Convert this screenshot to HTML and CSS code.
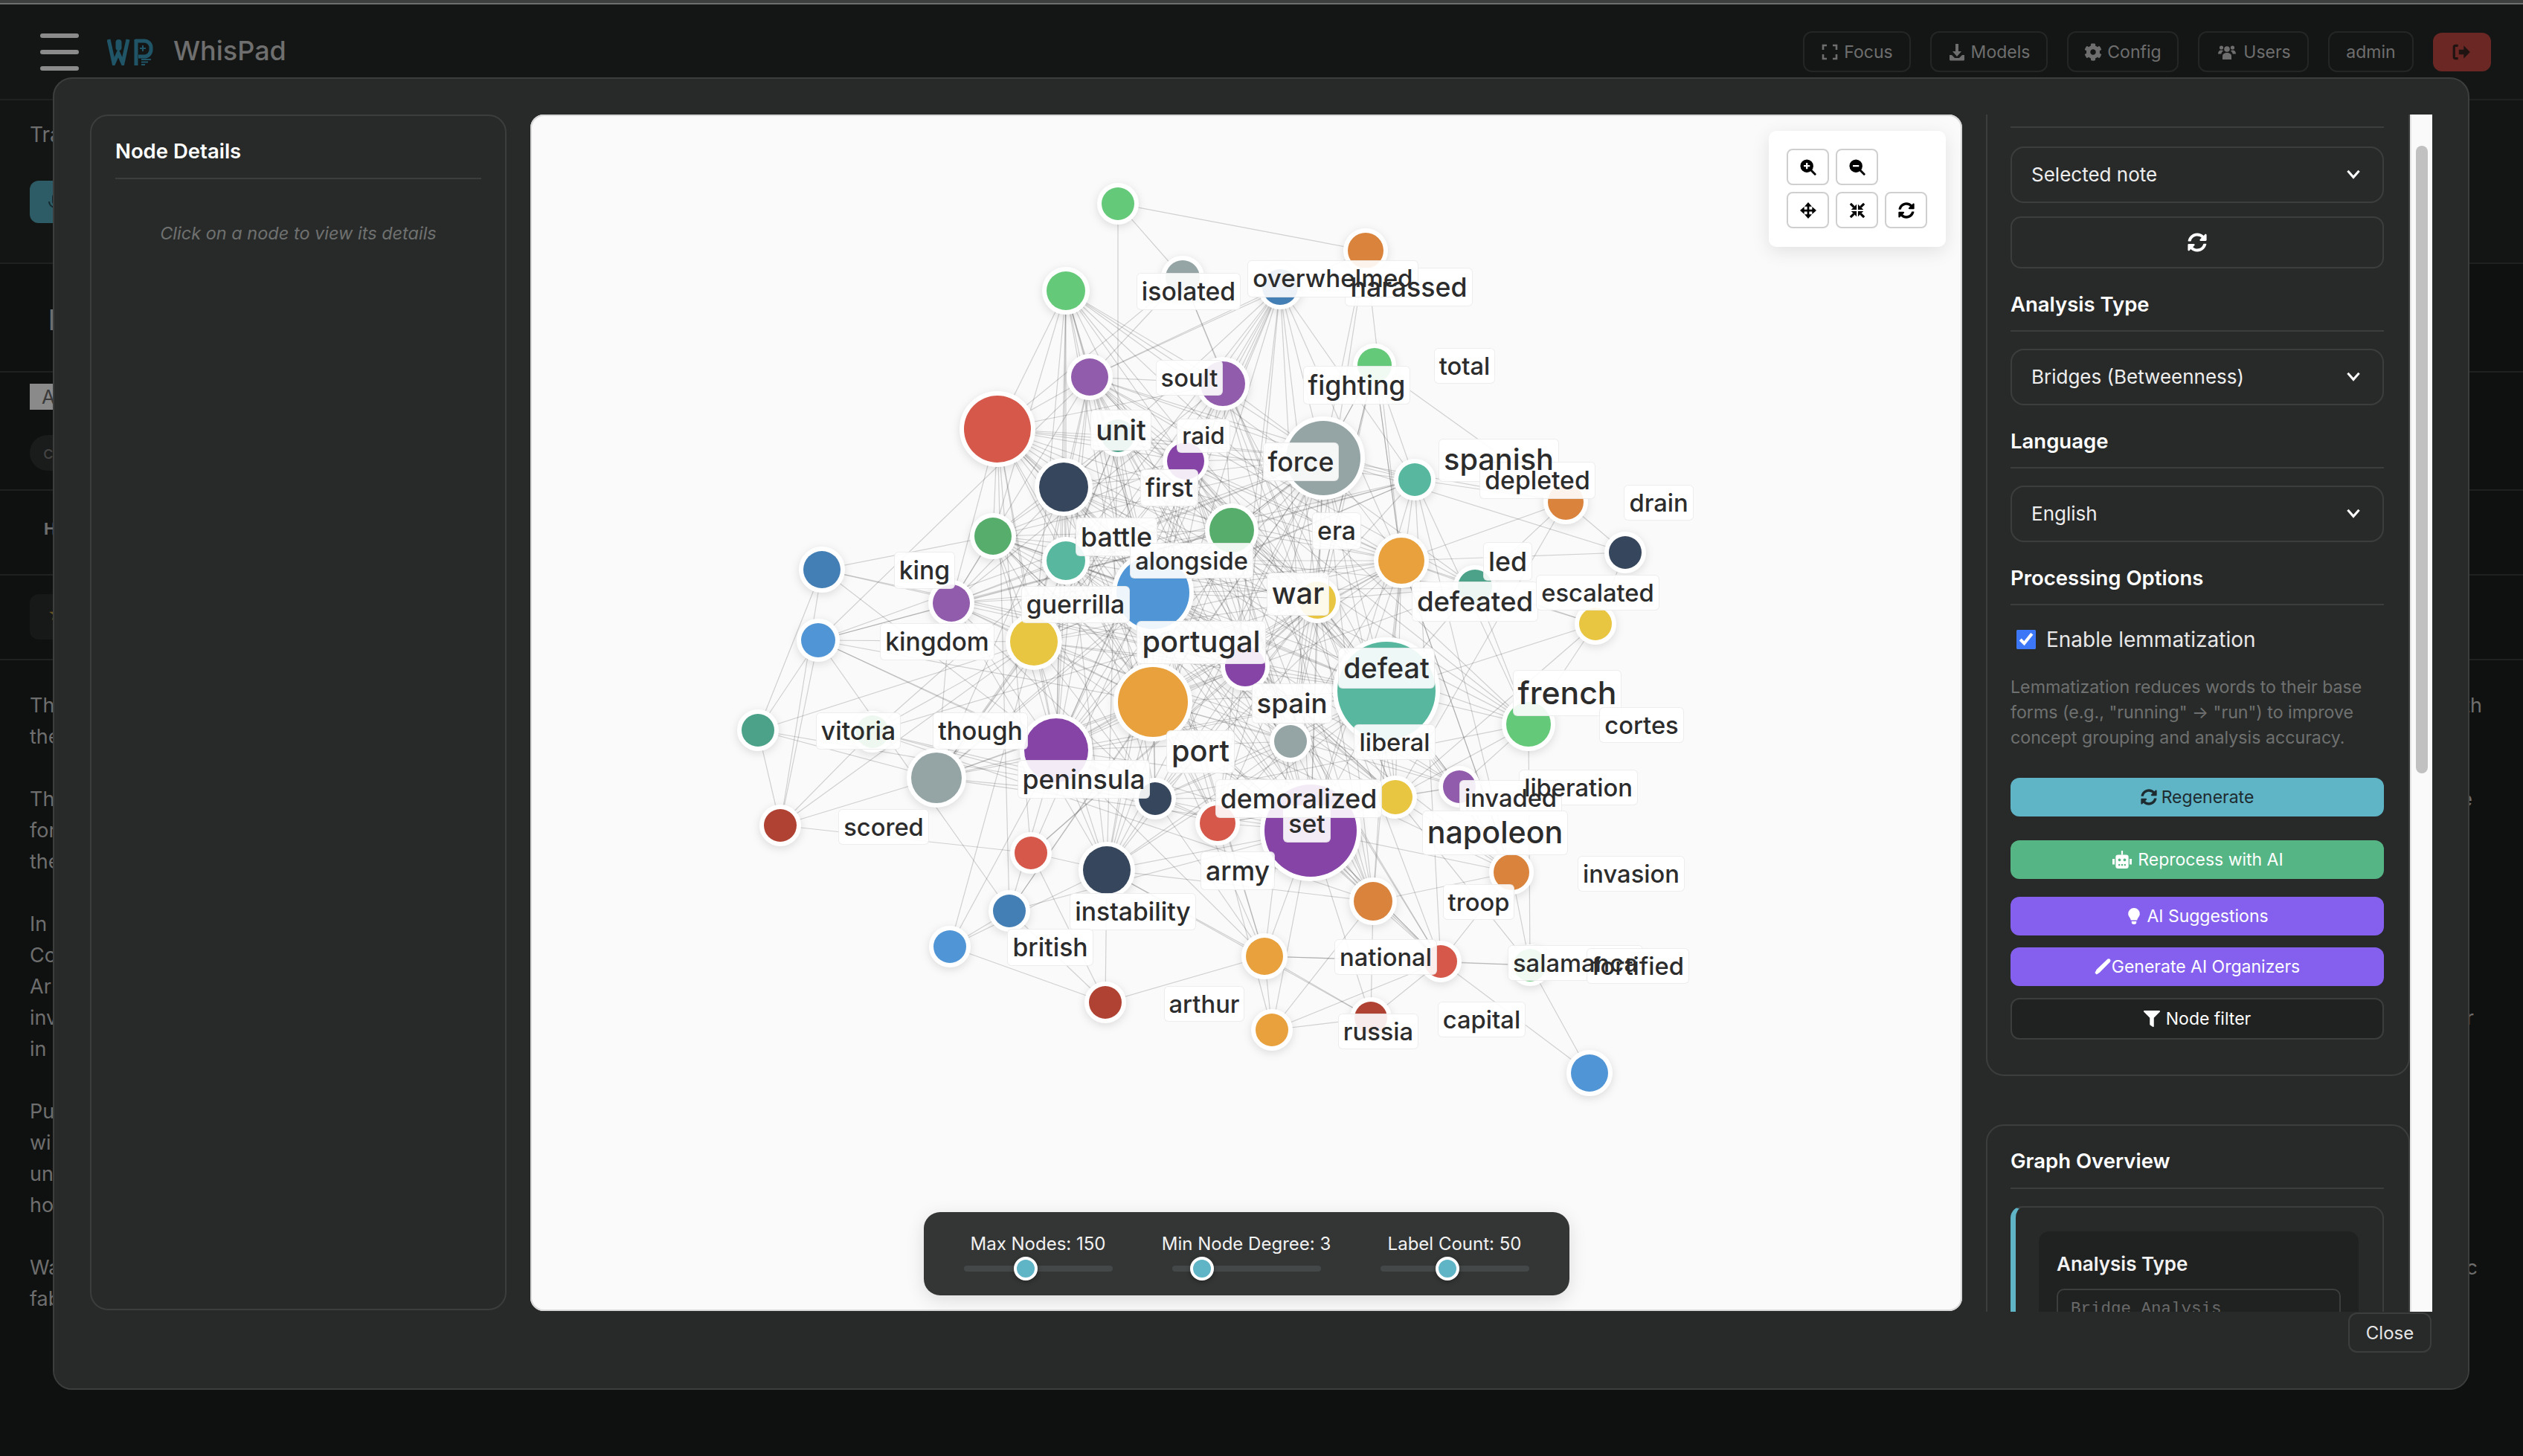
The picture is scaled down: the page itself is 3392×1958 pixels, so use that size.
FILE: index.html
```html
<!DOCTYPE html>
<html lang="en">
<head>
<meta charset="utf-8">
<title>WhisPad</title>
<link rel="stylesheet" href="styles.css">
</head>
<body>
<svg class="sprite" aria-hidden="true">
  <symbol id="i-sync" viewBox="0 0 512 512"><path d="M370.72 133.28C339.458 104.008 298.888 87.962 255.848 88c-77.458.068-144.328 53.178-162.791 126.85-1.344 5.363-6.122 9.15-11.651 9.15H24.103c-7.498 0-13.194-6.807-11.807-14.176C33.933 94.924 134.813 8 256 8c66.448 0 126.791 26.136 171.315 68.685L463.03 40.97C478.149 25.851 504 36.559 504 57.941V192c0 13.255-10.745 24-24 24H345.941c-21.382 0-32.09-25.851-16.971-40.971l41.75-41.749zM32 296h134.059c21.382 0 32.09 25.851 16.971 40.971l-41.75 41.75c31.262 29.273 71.835 45.319 114.876 45.28 77.418-.07 144.315-53.144 162.787-126.849 1.344-5.363 6.122-9.15 11.651-9.15h57.304c7.498 0 13.194 6.807 11.807 14.176C478.067 417.076 377.187 504 256 504c-66.448 0-126.791-26.136-171.315-68.685L48.97 471.03C33.851 486.149 8 475.441 8 454.059V320c0-13.255 10.745-24 24-24z"/></symbol>
  <symbol id="i-cog" viewBox="0 0 512 512"><path d="M487.4 315.7l-42.6-24.6c4.3-23.2 4.3-47 0-70.2l42.6-24.6c4.9-2.8 7.1-8.6 5.5-14-11.1-35.6-30-67.8-54.7-94.6-3.8-4.1-10-5.1-14.8-2.3L380.8 110c-17.9-15.4-38.5-27.3-60.8-35.1V25.8c0-5.6-3.9-10.5-9.4-11.7-36.7-8.2-74.3-7.8-109.2 0-5.5 1.2-9.4 6.1-9.4 11.7V75c-22.2 7.9-42.8 19.8-60.8 35.1L88.7 85.5c-4.9-2.8-11-1.9-14.8 2.3-24.7 26.7-43.6 58.9-54.7 94.6-1.7 5.4.6 11.2 5.5 14L67.3 221c-4.3 23.2-4.3 47 0 70.2l-42.6 24.6c-4.9 2.8-7.1 8.6-5.5 14 11.1 35.6 30 67.8 54.7 94.6 3.8 4.1 10 5.1 14.8 2.3l42.6-24.6c17.9 15.4 38.5 27.3 60.8 35.1v49.2c0 5.6 3.9 10.5 9.4 11.7 36.7 8.2 74.3 7.8 109.2 0 5.5-1.2 9.4-6.1 9.4-11.7v-49.2c22.2-7.9 42.8-19.8 60.8-35.1l42.6 24.6c4.9 2.8 11 1.9 14.8-2.3 24.7-26.7 43.6-58.9 54.7-94.6 1.5-5.5-.7-11.3-5.6-14.1zM256 336c-44.1 0-80-35.9-80-80s35.9-80 80-80 80 35.9 80 80-35.9 80-80 80z"/></symbol>
  <symbol id="i-filter" viewBox="0 0 512 512"><path d="M487.976 0H24.028C2.71 0-8.047 25.866 7.058 40.971L192 225.941V432c0 7.831 3.821 15.17 10.237 19.662l80 55.98C298.02 518.69 320 507.493 320 487.98V225.941l184.947-184.97C520.021 25.896 509.338 0 487.976 0z"/></symbol>
  <symbol id="i-focus" viewBox="0 0 24 24"><path d="M3 9V3h5M16 3h5v6M21 15v6h-5M8 21H3v-6" fill="none" stroke="currentColor" stroke-width="2.6"/></symbol>
  <symbol id="i-download" viewBox="0 0 24 24"><path d="M10 1h4v10h4l-6 7-6-7h4z"/><path d="M2 16h3l4 4h6l4-4h3v6a1.500 1.500 0 0 1-1.500 1.500h-17A1.500 1.500 0 0 1 2 22z"/></symbol>
  <symbol id="i-users" viewBox="0 0 24 24"><circle cx="12" cy="8" r="3.800"/><path d="M6 22v-4.500C6 14.500 8.500 13 12 13s6 1.500 6 4.500V22z"/><circle cx="4.500" cy="6" r="2.600"/><circle cx="19.500" cy="6" r="2.600"/><path d="M0 14.500C0 11 1.800 9.500 4.500 9.500c1 0 1.900.2 2.700.7C5.400 11.500 4.500 13 4.300 14.500z"/><path d="M24 14.500C24 11 22.200 9.500 19.500 9.500c-1 0-1.900.2-2.700.7 1.800 1.300 2.700 2.800 2.900 4.300z"/></symbol>
  <symbol id="i-logout" viewBox="0 0 24 24"><path d="M8 4H5a2 2 0 0 0-2 2v12a2 2 0 0 0 2 2h3" fill="none" stroke="currentColor" stroke-width="3"/><path d="M9 9h6V4l8 8-8 8v-5H9z"/></symbol>
  <symbol id="i-zoomin" viewBox="0 0 24 24"><circle cx="10" cy="10" r="9.500"/><path d="M10 5.500v9M5.500 10h9" stroke="#fff" stroke-width="2.600"/><path d="M15 15l7 7" stroke="#000" stroke-width="3.200" stroke-linecap="round"/></symbol>
  <symbol id="i-zoomout" viewBox="0 0 24 24"><circle cx="10" cy="10" r="9.500"/><path d="M5.500 10h9" stroke="#fff" stroke-width="2.600"/><path d="M15 15l7 7" stroke="#000" stroke-width="3.200" stroke-linecap="round"/></symbol>
  <symbol id="i-move" viewBox="0 0 24 24"><path d="M12 0l5.500 6.200h-4v4.300h4.300v-4L24 12l-6.200 5.500v-4h-4.300v4.300h4L12 24l-5.500-6.200h4v-4.300H6.200v4L0 12l6.200-5.500v4h4.300V6.200h-4z"/></symbol>
  <symbol id="i-compress" viewBox="0 0 24 24"><path d="M11 3V11H3zM13 3V11h8zM11 21V13H3zM13 21V13h8z"/><path d="M7 7L2 2M17 7l5-5M7 17l-5 5M17 17l5 5" stroke="#000" stroke-width="3.400"/></symbol>
  <symbol id="i-robot" viewBox="0 0 24 24"><path fill-rule="evenodd" d="M7 6h10a3 3 0 0 1 3 3v11a3 3 0 0 1-3 3H7a3 3 0 0 1-3-3V9a3 3 0 0 1 3-3zM8.800 10.500a1.800 1.800 0 1 0 0 3.600 1.800 1.800 0 1 0 0-3.600zM15.200 10.500a1.800 1.800 0 1 0 0 3.600 1.800 1.800 0 1 0 0-3.600zM7.500 17.500v2h2v-2zM11 17.500v2h2v-2zM14.500 17.500v2h2v-2z"/><path d="M11 1h2v5h-2zM0 11h2.800v7H0zM21.200 11H24v7h-2.800z"/></symbol>
  <symbol id="i-bulb" viewBox="0 0 24 24"><path d="M12 0a8.500 8.500 0 0 0-8.500 8.500c0 4 3 5.500 4 9.500h9c1-4 4-5.500 4-9.500A8.500 8.500 0 0 0 12 0z"/><path d="M8.500 19.500h7V21a3 3 0 0 1-3 3h-1a3 3 0 0 1-3-3z"/></symbol>
  <symbol id="i-pen" viewBox="0 0 24 24"><path d="M19 .8c1.200-1 3-.7 3.800.5 1 1.200.8 2.800-.2 3.800L7.500 20.500 3 23.500l-2.500-2.500 2.500-5z"/></symbol>
  <symbol id="i-mic" viewBox="0 0 24 24"><rect x="8" y="1" width="8" height="14" rx="4"/><path d="M4 11a8 8 0 0 0 16 0M12 19v4" fill="none" stroke="currentColor" stroke-width="2"/></symbol>
  <symbol id="i-chev" viewBox="0 0 24 24"><path d="M5 8l7 8 7-8" fill="none" stroke="currentColor" stroke-width="2.800"/></symbol>
</svg>

<div class="app">
  <div class="strip"></div>
  <header class="topbar">
    <button class="burger" aria-label="Menu"><i></i><i></i><i></i></button>
    <svg class="logo" viewBox="0 0 64 36" aria-hidden="true">
      <path d="M2 1l7 32 6-14 6 14 7-32" fill="none" stroke="currentColor" stroke-width="5"/>
      <rect x="11.500" y="1" width="8" height="15" rx="4" fill="currentColor"/>
      <path d="M39 1v35" stroke="currentColor" stroke-width="5"/>
      <path d="M38 3h12a9 9 0 0 1 9 9v3a9 9 0 0 1-9 9h-8" fill="none" stroke="currentColor" stroke-width="5"/>
      <path d="M48 9v8M44 13h8M46 28h13M46 31.500h9M46 35h5" stroke="currentColor" stroke-width="2" fill="none"/>
    </svg>
    <span class="brand">WhisPad</span>
    <nav class="topnav">
      <button class="topbtn b-focus"><svg class="ic"><use href="#i-focus"/></svg>Focus</button>
      <button class="topbtn b-models"><svg class="ic"><use href="#i-download"/></svg>Models</button>
      <button class="topbtn b-config"><svg class="ic"><use href="#i-cog"/></svg>Config</button>
      <button class="topbtn b-users"><svg class="ic ic-wide"><use href="#i-users"/></svg>Users</button>
      <button class="topbtn b-admin">admin</button>
      <button class="logout" aria-label="Log out"><svg class="ic"><use href="#i-logout"/></svg></button>
    </nav>
  </header>

  <section class="bg-sec bg-a">
    <div class="bg-title">Transcribe</div>
    <button class="bg-rec"><svg class="ic"><use href="#i-mic"/></svg></button>
  </section>
  <section class="bg-sec bg-b"><div class="bg-note">Note</div></section>
  <section class="bg-sec bg-c">
    <span class="bg-tag">AI</span>
    <span class="bg-pill">concept</span>
  </section>
  <section class="bg-sec bg-d"><strong class="bg-h">H1</strong></section>
  <section class="bg-sec bg-e"><div class="bg-box"><span class="bg-star">★</span></div></section>
  <article class="bg-text">
    <p><span class="ln l-th"><span>Th</span><span>th</span></span><span class="ln">the</span></p>
    <p><span class="ln l-e"><span>Th</span><span>e</span></span><span class="ln">for</span><span class="ln">the</span></p>
    <p><span class="ln">In</span><span class="ln">Co</span><span class="ln">Ar</span><span class="ln l-r"><span>inv</span><span>r</span></span><span class="ln">in</span></p>
    <p><span class="ln">Pu</span><span class="ln">wi</span><span class="ln">un</span><span class="ln">ho</span></p>
    <p><span class="ln l-c"><span>Wa</span><span>c</span></span><span class="ln">fab</span></p>
  </article>
</div>

<div class="modal" role="dialog">
  <div class="modal-body">
    <aside class="panel details">
      <h3 class="sect sect-first">Node Details</h3>
      <p class="empty">Click on a node to view its details</p>
    </aside>

    <main class="canvas">
      <svg class="graph" viewBox="713 154 1925 1609" aria-hidden="true">
        <g id="edges" class="edges"></g>
        <g class="nodes">
          <circle class="node green" data-id="g1" data-w="0" cx="1503" cy="274" r="22"/>
          <circle class="node gray" data-id="gr1" data-w="6" cx="1590" cy="373" r="23"/>
          <circle class="node green" data-id="g2" data-w="22" cx="1433" cy="391" r="26"/>
          <circle class="node dblue" data-id="b1" data-w="18" cx="1721" cy="386" r="24"/>
          <circle class="node dorange" data-id="o1" data-w="0" cx="1836" cy="337" r="24"/>
          <circle class="node purple" data-id="pu1" data-w="25" cx="1465" cy="507" r="25"/>
          <circle class="node purple" data-id="pu2" data-w="20" cx="1644" cy="516" r="30"/>
          <circle class="node green" data-id="g3" data-w="8" cx="1848" cy="491" r="23"/>
          <circle class="node red" data-id="r1" data-w="40" cx="1341" cy="577" r="45"/>
          <circle class="node dteal" data-id="t1" data-w="25" cx="1503" cy="586" r="22"/>
          <circle class="node dpurple" data-id="pd1" data-w="25" cx="1594" cy="620" r="25"/>
          <circle class="node navy" data-id="nv1" data-w="35" cx="1430" cy="655" r="33"/>
          <circle class="node gray" data-id="f" data-w="40" cx="1779" cy="616" r="50"/>
          <circle class="node teal" data-id="t2" data-w="18" cx="1902" cy="645" r="22"/>
          <circle class="node dorange" data-id="oo1" data-w="0" cx="2105" cy="675" r="24"/>
          <circle class="node dgreen" data-id="gn1" data-w="28" cx="1335" cy="721" r="25"/>
          <circle class="node dgreen" data-id="gn2" data-w="30" cx="1656" cy="713" r="30"/>
          <circle class="node teal" data-id="t3" data-w="30" cx="1433" cy="754" r="26"/>
          <circle class="node dblue" data-id="b2" data-w="12" cx="1105" cy="766" r="25"/>
          <circle class="node navy" data-id="nv2" data-w="0" cx="2185" cy="743" r="22"/>
          <circle class="node orange" data-id="a1" data-w="30" cx="1884" cy="754" r="31"/>
          <circle class="node dteal" data-id="dt1" data-w="12" cx="1983" cy="789" r="23"/>
          <circle class="node purple" data-id="pu3" data-w="22" cx="1279" cy="811" r="25"/>
          <circle class="node blue" data-id="bb1" data-w="50" cx="1550" cy="797" r="49"/>
          <circle class="node yellow" data-id="y1" data-w="35" cx="1771" cy="807" r="25"/>
          <circle class="node yellow" data-id="y2" data-w="0" cx="2145" cy="839" r="22"/>
          <circle class="node yellow" data-id="y3" data-w="35" cx="1390" cy="863" r="32"/>
          <circle class="node blue" data-id="b3" data-w="12" cx="1100" cy="861" r="23"/>
          <circle class="node dpurple" data-id="pd2" data-w="35" cx="1674" cy="896" r="27"/>
          <circle class="node dteal" data-id="dt2" data-w="0" cx="1019" cy="982" r="22"/>
          <circle class="node dgreen" data-id="pg" data-w="6" cx="1173" cy="984" r="22"/>
          <circle class="node gray" data-id="gr2" data-w="22" cx="1259" cy="1046" r="34"/>
          <circle class="node orange" data-id="a2" data-w="50" cx="1550" cy="944" r="47"/>
          <circle class="node dpurple" data-id="pd3" data-w="40" cx="1420" cy="1009" r="43"/>
          <circle class="node teal" data-id="d1" data-w="45" cx="1864" cy="929" r="66"/>
          <circle class="node green" data-id="g4" data-w="10" cx="2055" cy="974" r="30"/>
          <circle class="node gray" data-id="gr3" data-w="25" cx="1735" cy="997" r="22"/>
          <circle class="node dred" data-id="dr1" data-w="0" cx="1049" cy="1110" r="22"/>
          <circle class="node navy" data-id="nv3" data-w="25" cx="1553" cy="1074" r="22"/>
          <circle class="node yellow" data-id="y4" data-w="20" cx="1876" cy="1072" r="23"/>
          <circle class="node purple" data-id="pu4" data-w="15" cx="1962" cy="1058" r="22"/>
          <circle class="node red" data-id="rr1" data-w="20" cx="1637" cy="1107" r="24"/>
          <circle class="node dpurple" data-id="pd4" data-w="40" cx="1762" cy="1117" r="62"/>
          <circle class="node red" data-id="rr2" data-w="8" cx="1386" cy="1147" r="22"/>
          <circle class="node navy" data-id="nv4" data-w="25" cx="1488" cy="1170" r="32"/>
          <circle class="node dorange" data-id="oo2" data-w="8" cx="2032" cy="1173" r="24"/>
          <circle class="node dorange" data-id="oo3" data-w="20" cx="1846" cy="1212" r="26"/>
          <circle class="node dblue" data-id="b4" data-w="7" cx="1357" cy="1225" r="22"/>
          <circle class="node blue" data-id="b5" data-w="0" cx="1277" cy="1273" r="22"/>
          <circle class="node orange" data-id="a3" data-w="14" cx="1700" cy="1286" r="25"/>
          <circle class="node red" data-id="rr3" data-w="8" cx="1937" cy="1293" r="22"/>
          <circle class="node green" data-id="g5" data-w="0" cx="2057" cy="1298" r="22"/>
          <circle class="node dred" data-id="dr2" data-w="0" cx="1486" cy="1348" r="22"/>
          <circle class="node dred" data-id="dr3" data-w="0" cx="1843" cy="1369" r="22"/>
          <circle class="node orange" data-id="a4" data-w="0" cx="1710" cy="1385" r="22"/>
          <circle class="node blue" data-id="b6" data-w="0" cx="2137" cy="1443" r="25"/>
        </g>
      </svg>
      <div class="labels">
        <span class="lbl s34" style="left:885px;top:238px"><span class="box"><span class="txt">isolated</span></span></span>
        <span class="lbl s36" style="left:1181px;top:232px"><span class="box"><span class="txt">harassed</span></span></span>
        <span class="lbl s33b" style="left:1079px;top:221px"><span class="box"><span class="txt">overwhelmed</span></span></span>
        <span class="lbl s33" style="left:1256px;top:338px"><span class="box"><span class="txt">total</span></span></span>
        <span class="lbl s36" style="left:1111px;top:364px"><span class="box"><span class="txt">fighting</span></span></span>
        <span class="lbl s40" style="left:1302px;top:465px"><span class="box"><span class="txt">spanish</span></span></span>
        <span class="lbl s34" style="left:1354px;top:492px"><span class="box"><span class="txt">depleted</span></span></span>
        <span class="lbl s33" style="left:1517px;top:522px"><span class="box"><span class="txt">drain</span></span></span>
        <span class="lbl s36" style="left:1036px;top:467px"><span class="box"><span class="txt">force</span></span></span>
        <span class="lbl s34" style="left:1084px;top:560px"><span class="box"><span class="txt">era</span></span></span>
        <span class="lbl s36" style="left:1314px;top:601px"><span class="box"><span class="txt">led</span></span></span>
        <span class="lbl s38" style="left:794px;top:424px"><span class="box"><span class="txt">unit</span></span></span>
        <span class="lbl s32" style="left:905px;top:432px"><span class="box"><span class="txt">raid</span></span></span>
        <span class="lbl s33" style="left:886px;top:354px"><span class="box"><span class="txt">soult</span></span></span>
        <span class="lbl s34" style="left:859px;top:502px"><span class="box"><span class="txt">first</span></span></span>
        <span class="lbl s36" style="left:788px;top:568px"><span class="box"><span class="txt">battle</span></span></span>
        <span class="lbl s33" style="left:889px;top:600px"><span class="box"><span class="txt">alongside</span></span></span>
        <span class="lbl s34" style="left:530px;top:613px"><span class="box"><span class="txt">king</span></span></span>
        <span class="lbl s34" style="left:733px;top:659px"><span class="box"><span class="txt">guerrilla</span></span></span>
        <span class="lbl s34" style="left:547px;top:709px"><span class="box"><span class="txt">kingdom</span></span></span>
        <span class="lbl s40" style="left:902px;top:710px"><span class="box"><span class="txt">portugal</span></span></span>
        <span class="lbl s40" style="left:1032px;top:645px"><span class="box"><span class="txt">war</span></span></span>
        <span class="lbl s37" style="left:1270px;top:655px"><span class="box"><span class="txt">defeated</span></span></span>
        <span class="lbl s33" style="left:1435px;top:643px"><span class="box"><span class="txt">escalated</span></span></span>
        <span class="lbl s34" style="left:441px;top:829px"><span class="box"><span class="txt">vitoria</span></span></span>
        <span class="lbl s34" style="left:605px;top:829px"><span class="box"><span class="txt">though</span></span></span>
        <span class="lbl s40" style="left:901px;top:857px"><span class="box"><span class="txt">port</span></span></span>
        <span class="lbl s36" style="left:744px;top:894px"><span class="box"><span class="txt">peninsula</span></span></span>
        <span class="lbl s33" style="left:475px;top:958px"><span class="box"><span class="txt">scored</span></span></span>
        <span class="lbl s37" style="left:1024px;top:792px"><span class="box"><span class="txt">spain</span></span></span>
        <span class="lbl s38" style="left:1151px;top:744px"><span class="box"><span class="txt">defeat</span></span></span>
        <span class="lbl s33" style="left:1162px;top:844px"><span class="box"><span class="txt">liberal</span></span></span>
        <span class="lbl s44" style="left:1394px;top:778px"><span class="box"><span class="txt">french</span></span></span>
        <span class="lbl s33" style="left:1494px;top:821px"><span class="box"><span class="txt">cortes</span></span></span>
        <span class="lbl s33" style="left:1409px;top:905px"><span class="box"><span class="txt">liberation</span></span></span>
        <span class="lbl s33" style="left:1318px;top:919px"><span class="box"><span class="txt">invaded</span></span></span>
        <span class="lbl s34" style="left:1044px;top:954px"><span class="box"><span class="txt">set</span></span></span>
        <span class="lbl s36" style="left:1033px;top:920px"><span class="box"><span class="txt">demoralized</span></span></span>
        <span class="lbl s42" style="left:1297px;top:966px"><span class="box"><span class="txt">napoleon</span></span></span>
        <span class="lbl s36" style="left:951px;top:1017px"><span class="box"><span class="txt">army</span></span></span>
        <span class="lbl s34" style="left:810px;top:1072px"><span class="box"><span class="txt">instability</span></span></span>
        <span class="lbl s33" style="left:1480px;top:1021px"><span class="box"><span class="txt">invasion</span></span></span>
        <span class="lbl s33" style="left:1275px;top:1059px"><span class="box"><span class="txt">troop</span></span></span>
        <span class="lbl s34" style="left:699px;top:1120px"><span class="box"><span class="txt">british</span></span></span>
        <span class="lbl s33" style="left:1150px;top:1133px"><span class="box"><span class="txt">national</span></span></span>
        <span class="lbl s33" style="left:1405px;top:1141px"><span class="box"><span class="txt">salamanca</span></span></span>
        <span class="lbl s33" style="left:1489px;top:1145px"><span class="box"><span class="txt">fortified</span></span></span>
        <span class="lbl s33" style="left:906px;top:1196px"><span class="box"><span class="txt">arthur</span></span></span>
        <span class="lbl s33" style="left:1279px;top:1217px"><span class="box"><span class="txt">capital</span></span></span>
        <span class="lbl s33" style="left:1140px;top:1233px"><span class="box"><span class="txt">russia</span></span></span>
      </div>

      <div class="tools">
        <button class="tool"><svg class="ic"><use href="#i-zoomin"/></svg></button>
        <button class="tool"><svg class="ic"><use href="#i-zoomout"/></svg></button>
        <span></span>
        <button class="tool"><svg class="ic"><use href="#i-move"/></svg></button>
        <button class="tool"><svg class="ic"><use href="#i-compress"/></svg></button>
        <button class="tool"><svg class="ic"><use href="#i-sync"/></svg></button>
      </div>

      <div class="sliders">
        <label class="slider"><span>Max Nodes: 150</span><input type="range" min="0" max="1000" value="399"></label>
        <label class="slider"><span>Min Node Degree: 3</span><input type="range" min="0" max="1000" value="143"></label>
        <label class="slider"><span>Label Count: 50</span><input type="range" min="0" max="1000" value="446"></label>
      </div>
    </main>

    <div class="side">
      <div class="side-scroll">
        <section class="panel card-a">
          <div class="rule"></div>
          <div class="select"><span>Selected note</span><svg class="chev"><use href="#i-chev"/></svg></div>
          <button class="refresh"><svg class="ic"><use href="#i-sync"/></svg></button>
          <h3 class="sect">Analysis Type</h3>
          <div class="select"><span>Bridges (Betweenness)</span><svg class="chev"><use href="#i-chev"/></svg></div>
          <h3 class="sect">Language</h3>
          <div class="select"><span>English</span><svg class="chev"><use href="#i-chev"/></svg></div>
          <h3 class="sect">Processing Options</h3>
          <label class="check"><input type="checkbox" checked><span>Enable lemmatization</span></label>
          <p class="help">Lemmatization reduces words to their base forms (e.g., "running" → "run") to improve concept grouping and analysis accuracy.</p>
          <button class="act act-regen"><svg class="ic"><use href="#i-sync"/></svg>Regenerate</button>
          <button class="act act-green"><svg class="ic ic-robot"><use href="#i-robot"/></svg>Reprocess with AI</button>
          <button class="act act-violet act-s"><svg class="ic"><use href="#i-bulb"/></svg>AI Suggestions</button>
          <button class="act act-violet act-g"><svg class="ic"><use href="#i-pen"/></svg>Generate AI Organizers</button>
          <button class="act act-dark"><svg class="ic"><use href="#i-filter"/></svg>Node filter</button>
        </section>
        <section class="panel card-b">
          <h3 class="sect sect-first">Graph Overview</h3>
          <div class="overview">
            <div class="overview-in">
              <h4 class="sub">Analysis Type</h4>
              <div class="mono">Bridge Analysis</div>
            </div>
          </div>
        </section>
      </div>
      <div class="scrollbar"><div class="thumb"></div></div>
    </div>
  </div>
  <footer class="modal-foot"><button class="close">Close</button></footer>
</div>
<script src="graph.js"></script>
</body>
</html>
```
FILE: styles.css
```css
* { box-sizing: border-box; }
html, body { margin: 0; height: 100%; }
body { width: 3392px; height: 1958px; overflow: hidden; background: #0f1110; color: #e8e8e8; font-family: Inter, "Liberation Sans", sans-serif; position: relative; }
button { font: inherit; color: inherit; background: none; cursor: pointer; }
.sprite { position: absolute; width: 0; height: 0; }
.ic { width: 24px; height: 24px; fill: currentColor; flex: none; }

/* background page */
.app { height: 1958px; overflow: hidden; }
.strip { height: 6px; background: #3d3e3e; border-bottom: 2px solid #6e6e6e; }
.topbar { height: 129px; display: flex; align-items: center; padding: 0 43px 0 54px; background: #141615; border-bottom: 2px solid #1e2120; }
.burger { width: 52px; height: 50px; padding: 0; border: 0; display: flex; flex-direction: column; justify-content: space-between; margin-right: 38px; }
.burger i { display: block; height: 6px; border-radius: 3px; background: #8b8b8b; }
.logo { width: 64px; height: 36px; color: #1f5566; margin-right: 25px; }
.brand { font-size: 36px; font-weight: 500; color: #6f6f6f; margin-top: -3px; }
.topnav { margin-left: auto; display: flex; align-items: center; gap: 26px; }
.topbtn { height: 55px; padding: 0; display: flex; align-items: center; justify-content: center; gap: 7px; border: 2px solid #232625; border-radius: 12px; font-size: 23px; color: #6e6e6e; }
.b-focus { width: 145px; } .b-models { width: 158px; } .b-config { width: 150px; } .b-users { width: 149px; } .b-admin { width: 115px; }
.ic-wide { width: 30px; }
.logout { width: 78px; height: 52px; border: 0; border-radius: 12px; background: #6b2724; color: #201413; display: flex; align-items: center; justify-content: center; padding-right: 8px; }
.logout .ic { width: 26px; height: 26px; }
.bg-sec { padding-left: 40px; border-bottom: 2px solid #1e2120; background: #131514; }
.bg-a { height: 220px; padding-top: 28px; }
.bg-title { font-size: 28px; color: #6e6e6e; line-height: 36px; }
.bg-rec { display: flex; align-items: center; margin-top: 44px; width: 200px; height: 57px; border: 0; border-radius: 12px; background: #2d5c66; color: #14282d; padding-left: 22px; }
.bg-b { height: 146px; background: #0f1110; padding: 52px 0 0 65px; }
.bg-note { font-size: 38px; font-weight: 600; color: #6e6e6e; }
.bg-c { height: 159px; background: #0f1110; padding-top: 15px; display: flex; flex-direction: column; align-items: flex-start; gap: 34px; }
.bg-tag { width: 120px; height: 35px; background: #8a8a8a; color: #3a3a3a; font-size: 26px; line-height: 35px; padding-left: 16px; }
.bg-pill { width: 200px; height: 48px; background: #1a1c1b; border-radius: 24px; color: #444; font-size: 24px; line-height: 48px; padding-left: 18px; }
.bg-d { height: 114px; background: #0f1110; padding: 38px 0 0 59px; }
.bg-h { font-size: 22px; color: #6e6e6e; }
.bg-e { height: 114px; background: #0f1110; padding-top: 25px; }
.bg-box { width: 200px; height: 61px; background: #171918; border-radius: 12px; padding: 14px 0 0 24px; }
.bg-star { color: #6b5221; font-size: 22px; }
.bg-text { padding: 40px 55px 0 40px; font-size: 27px; line-height: 42px; color: #6e6e6e; }
.bg-text p { margin: 0 0 42px; }
.ln { display: flex; justify-content: space-between; }
.l-th { width: 3297px; }
.l-e { width: 3284px; }
.l-r { width: 3286px; }
.l-c { width: 3291px; }

/* modal */
.modal { position: absolute; left: 71px; top: 104px; width: 3249px; height: 1765px; background: #282a29; border: 2px solid #3c3e3e; border-radius: 26px; display: flex; flex-direction: column; overflow: hidden; }
.modal-body { height: 1660px; display: flex; gap: 32px; padding: 48px 48px 0; }
.panel { border: 2px solid #3c3e3e; border-radius: 24px; background: #282a29; }
.details { width: 560px; flex: none; height: 1608px; padding: 30px 32px 0; }
.sect { margin: 31px 0 23px; padding-bottom: 18px; border-bottom: 2px solid #3c3e3e; font-size: 27.500px; line-height: 34px; font-weight: 600; color: #fff; }
.sect-first { margin-top: 0; padding-bottom: 19px; }
.empty { margin: 57px 0 0; text-align: center; font-size: 23.500px; line-height: 32px; font-style: italic; color: #6f7170; }

.canvas { position: relative; width: 1925px; flex: none; height: 1609px; background: #fafafa; border-radius: 18px; overflow: hidden; box-shadow: inset 0 0 0 2px #d8d8d8; }
.graph { position: absolute; inset: 0; width: 100%; height: 100%; display: block; }
.edges line { stroke: rgba(40, 40, 40, 0.2); stroke-width: 1.2; }
.node { stroke: #fff; stroke-width: 12; paint-order: stroke; filter: drop-shadow(0 3px 6px rgba(0, 0, 0, 0.12)); }
.green { fill: #65c97a; } .gray { fill: #95a5a6; } .dgreen { fill: #57ad6b; }
.purple { fill: #915cac; } .dpurple { fill: #8544a6; } .red { fill: #d5584a; }
.dred { fill: #b04233; } .navy { fill: #36465c; } .teal { fill: #57b89f; }
.dteal { fill: #4ba288; } .blue { fill: #5095d6; } .dblue { fill: #437eb4; }
.orange { fill: #e8a13c; } .dorange { fill: #d9833c; } .yellow { fill: #e8c641; }
.labels { position: absolute; inset: 0; }
.lbl { position: absolute; width: 0; height: 0; display: flex; align-items: center; justify-content: center; color: #2c2c2c; font-weight: 550; line-height: 1.3; white-space: nowrap; }
.box { flex: none; padding: 2px 6px; background: rgba(255, 255, 255, 0.9); border: 1px solid rgba(0, 0, 0, 0.07); border-radius: 6px; }
.txt { position: relative; z-index: 1; }
.s32 { font-size: 31.500px; } .s33 { font-size: 32.700px; } .s33b { font-size: 33.200px; } .s34 { font-size: 33.700px; } .s36 { font-size: 35.700px; }
.s37 { font-size: 36.700px; } .s38 { font-size: 37.700px; } .s40 { font-size: 39.700px; } .s42 { font-size: 41.200px; } .s44 { font-size: 42.700px; }

.tools { position: absolute; top: 22px; right: 22px; width: 238px; height: 156px; padding: 24px; background: #fff; border-radius: 10px; box-shadow: 0 6px 24px rgba(0, 0, 0, 0.1); display: grid; grid-template-columns: repeat(3, 57px); grid-auto-rows: 49px; gap: 9px; }
.tool { padding: 0; display: flex; align-items: center; justify-content: center; background: #fff; border: 2px solid #cfcfcf; border-radius: 8px; color: #000; }
.tool .ic { width: 22px; height: 22px; }

.sliders { position: absolute; left: 50%; bottom: 21px; transform: translateX(-50%); width: 868px; height: 112px; padding: 29px 54px 0; background: #343635; border-radius: 22px; box-shadow: 0 6px 24px rgba(0, 0, 0, 0.12); display: flex; gap: 80px; }
.slider { width: 200px; display: flex; flex-direction: column; align-items: center; font-size: 24px; line-height: 28px; color: #f2f2f2; white-space: nowrap; gap: 8px; }
.slider input { appearance: none; -webkit-appearance: none; width: 200px; height: 8px; margin: 7px 0 0; background: #454848; border-radius: 4px; outline: none; }
.slider input::-webkit-slider-thumb { -webkit-appearance: none; width: 32px; height: 32px; border-radius: 50%; background: #5fb4c6; border: 4px solid #fff; box-shadow: 0 2px 6px rgba(0, 0, 0, 0.3); }

.side { position: relative; width: 600px; flex: none; height: 1610px; display: flex; overflow: hidden; }
.side-scroll { width: 570px; flex: none; }
.card-a { margin-top: -40px; padding: 54px 33px 47px 31px; border-radius: 24px; }
.rule { height: 2px; background: #3c3e3e; margin-bottom: 25px; }
.select { height: 76px; padding: 0 26px 2px; border: 2px solid #3c3e3e; border-radius: 18px; display: flex; align-items: center; justify-content: space-between; font-size: 26px; color: #eee; }
.chev { width: 26px; height: 26px; fill: currentColor; color: #fff; }
.refresh { width: 100%; height: 70px; margin-top: 18px; border: 2px solid #3c3e3e; border-radius: 14px; display: flex; align-items: center; justify-content: center; color: #fff; }
.refresh .ic { width: 26px; height: 26px; }
.check { display: flex; align-items: center; gap: 14px; margin: 30px 0 0 8px; font-size: 28px; line-height: 32px; color: #e8e8e8; }
.check input { width: 26px; height: 26px; margin: 0; accent-color: #3b77f6; }
.help { margin: 31px 0 0; font-size: 23.200px; line-height: 34px; color: #6f7170; }
.act { width: 100%; height: 52px; display: flex; align-items: center; justify-content: center; gap: 6px; border: 0; border-radius: 12px; font-size: 23px; color: #fff; margin-top: 32px; }
.act .ic { width: 22px; height: 22px; }
.act-regen { background: #5fb4c6; color: #1e2b2f; margin-top: 37px; }
.act-green { background: #55b585; }
.act-violet { background: #8560ef; }
.act-s { margin-top: 24px; }
.act-g { margin-top: 16px; gap: 1px; }
.ic-robot { width: 30px !important; height: 26px !important; }
.act-dark { height: 56px; margin-top: 16px; background: #202221; border: 2px solid #3c3e3e; gap: 8px; }
.card-b { margin-top: 65px; height: 300px; padding: 30px 33px 0 31px; }
.overview { height: 300px; border: 2px solid #3c3e3e; border-left: 7px solid #5fb4c6; border-radius: 16px; padding: 32px 32px 0 31px; }
.overview-in { height: 300px; background: #202221; border-radius: 14px; padding: 27px 24px 24px; }
.sub { margin: 0; font-size: 26px; line-height: 34px; font-weight: 600; color: #f2f2f2; }
.mono { margin-top: 16px; height: 60px; padding: 9px 17px; border: 2px solid #3c3e3e; border-radius: 10px; font-family: "Liberation Mono", monospace; font-size: 22.500px; line-height: 32px; color: #6a6a6a; }
.scrollbar { position: relative; width: 30px; height: 100%; background: #fafafa; border-left: 2px solid #e4e4e4; }
.thumb { position: absolute; left: 6px; top: 42px; width: 16px; height: 844px; border-radius: 8px; background: #c1c1c1; }

.modal-foot { flex: 1; display: flex; justify-content: flex-end; align-items: flex-start; padding: 0 49px 0 0; background: #282a29; position: relative; }
.close { width: 112px; height: 54px; margin-top: -1px; border: 2px solid #3c3e3e; border-radius: 12px; font-size: 24px; color: #e6e6e6; }
```
FILE: graph.js
```js
// Draws the graph's edges between the node circles from their ids and weights.
(function () {
  var SVG = 'http://www.w3.org/2000/svg';
  var nodes = {}, list = [];
  document.querySelectorAll('.node').forEach(function (c) {
    var n = { id: c.dataset.id, x: +c.getAttribute('cx'), y: +c.getAttribute('cy'), w: +c.dataset.w };
    nodes[n.id] = n; list.push(n);
  });
  var seed = 20240;
  function rnd() {
    seed |= 0; seed = seed + 0x6D2B79F5 | 0;
    var t = Math.imul(seed ^ seed >>> 15, 1 | seed);
    t = t + Math.imul(t ^ t >>> 7, 61 | t) ^ t;
    return ((t ^ t >>> 14) >>> 0) / 4294967296;
  }
  var g = document.getElementById('edges');
  function add(a, b) {
    var l = document.createElementNS(SVG, 'line');
    l.setAttribute('x1', a.x); l.setAttribute('y1', a.y);
    l.setAttribute('x2', b.x); l.setAttribute('y2', b.y);
    g.appendChild(l);
  }
  var fixed = 'g1-o1 g1-gr1 g1-t1 o1-f o1-a1 o1-gr3 o1-pu1 dt2-b2 dt2-b3 dt2-y3 dt2-gr2 dt2-dr1 dt2-nv3 ' +
    'dr1-b2 dr1-b3 dr1-pg dr1-gr2 dr1-rr2 dr1-y3 b5-pd3 b5-y3 b5-b4 b5-nv4 b5-dr2 dr2-nv4 dr2-a3 dr2-b4 dr2-rr2 ' +
    'a4-a3 a4-dr3 a4-rr3 a4-oo3 a4-pd4 a4-rr1 dr3-oo3 dr3-rr3 dr3-a3 dr3-pd4 dr3-nv4 rr3-a3 rr3-oo3 rr3-g5 rr3-oo2 rr3-pd4 ' +
    'g5-g4 g5-b6 g5-oo2 g5-a3 g5-y4 b6-rr3 oo2-pd4 oo2-y4 oo2-d1 oo2-oo3 oo2-a1 ' +
    'oo1-f oo1-a1 oo1-t2 oo1-nv2 oo1-dt1 oo1-y4 oo1-g3 nv2-f nv2-a1 nv2-y2 y2-dt1 y2-g4 y2-a1 y2-d1 y2-y4 ' +
    'g3-a1 g3-y1 g3-gr3 g3-f g3-t2';
  fixed.split(' ').forEach(function (p) {
    var e = p.split('-');
    add(nodes[e[0]], nodes[e[1]]);
  });
  var total = list.reduce(function (s, n) { return s + n.w; }, 0);
  for (var i = 0; i < list.length; i++) {
    for (var j = i + 1; j < list.length; j++) {
      var a = list[i], b = list[j];
      var d = Math.hypot(a.x - b.x, a.y - b.y);
      var p = a.w * b.w / total * 1.5 * Math.exp(-d / 700);
      if (rnd() < p) add(a, b);
    }
  }
})();
```
